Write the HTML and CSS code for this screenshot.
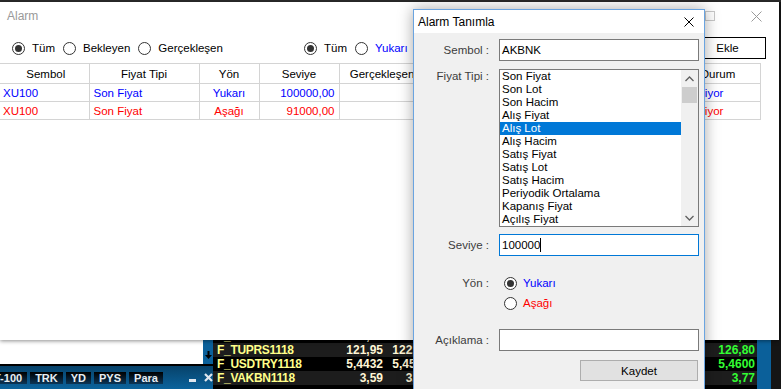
FILE: index.html
```html
<!DOCTYPE html>
<html lang="tr">
<head>
  <meta charset="UTF-8">
  <meta name="viewport" content="width=device-width, initial-scale=1.0">
  <title>Alarm</title>
  <link rel="stylesheet" href="styles.css">
</head>
<body>
  <!-- Trading app behind the windows -->
  <div class="app">
    <div class="app-top"></div>
    <div class="app-main">
      <div class="left-panel">
        <div class="panel-body">
          <div class="panel-white"></div>
          <div class="panel-strip">
            <svg width="7" height="8" viewBox="0 0 7 8"><path d="M2.5 0 H4.5 V4 H7 L3.5 8 L0 4 H2.5 Z" fill="#000"/></svg>
          </div>
        </div>
        <div class="tabbar">
          <span class="tab first">T-100</span>
          <span class="tab">TRK</span>
          <span class="tab">YD</span>
          <span class="tab">PYS</span>
          <span class="tab">Para</span>
          <span class="tab-tools">
            <svg width="7" height="9" viewBox="0 0 7 9"><rect x="0" y="6" width="7" height="3" fill="#dfe6ee"/></svg>
            <svg width="9" height="9" viewBox="0 0 9 9"><path d="M1 1 L8 8 M8 1 L1 8" stroke="#dfe6ee" stroke-width="2.2"/></svg>
          </span>
        </div>
      </div>
      <div class="quotes">
        <div class="qrow"><span class="q-name">F_TTKOM1118</span><span class="q-bid">3,72</span><span class="q-ask">3,73</span><span class="q-fill"></span><span class="q-last">3,85</span></div>
        <div class="qrow"><span class="q-name">F_TUPRS1118</span><span class="q-bid">121,95</span><span class="q-ask">122,00</span><span class="q-fill"></span><span class="q-last">126,80</span></div>
        <div class="qrow"><span class="q-name">F_USDTRY1118</span><span class="q-bid">5,4432</span><span class="q-ask">5,4500</span><span class="q-fill"></span><span class="q-last">5,4600</span></div>
        <div class="qrow"><span class="q-name">F_VAKBN1118</span><span class="q-bid">3,59</span><span class="q-ask">3,60</span><span class="q-fill"></span><span class="q-last">3,77</span></div>
        <div class="qrow"></div>
      </div>
      <div class="right-strip"></div>
      <div class="right-edge"></div>
    </div>
  </div>

  <!-- Alarm list window (inactive) -->
  <div class="alarm-window">
    <div class="titlebar">
      <span class="win-title">Alarm</span>
      <span class="win-btn"><span class="max-box"></span></span>
      <span class="win-btn">
        <svg width="11" height="11" viewBox="0 0 11 11"><path d="M0.5 0.5 L10.5 10.5 M10.5 0.5 L0.5 10.5" stroke="#9a9a9a" stroke-width="1"/></svg>
      </span>
    </div>
    <div class="toolbar">
      <div class="radio-group status">
        <span class="radio checked"><span class="circle"></span>Tüm</span>
        <span class="radio"><span class="circle"></span>Bekleyen</span>
        <span class="radio"><span class="circle"></span>Gerçekleşen</span>
      </div>
      <div class="radio-group">
        <span class="radio checked"><span class="circle"></span>Tüm</span>
        <span class="radio up"><span class="circle"></span>Yukarı</span>
      </div>
      <button class="btn-ekle">Ekle</button>
    </div>
    <table class="alarm-table">
      <colgroup>
        <col style="width: 89px">
        <col style="width: 110px">
        <col style="width: 60px">
        <col style="width: 80px">
        <col style="width: 86px">
        <col style="width: 120px">
        <col style="width: 131px">
        <col style="width: 84px">
      </colgroup>
      <thead>
        <tr>
          <th>Sembol</th>
          <th>Fiyat Tipi</th>
          <th>Yön</th>
          <th>Seviye</th>
          <th>Gerçekleşen</th>
          <th></th>
          <th></th>
          <th>Durum</th>
        </tr>
      </thead>
      <tbody>
        <tr class="up">
          <td>XU100</td>
          <td>Son Fiyat</td>
          <td class="center">Yukarı</td>
          <td class="right">100000,00</td>
          <td></td>
          <td></td>
          <td></td>
          <td class="state">Bekliyor</td>
        </tr>
        <tr class="down">
          <td>XU100</td>
          <td>Son Fiyat</td>
          <td class="center">Aşağı</td>
          <td class="right">91000,00</td>
          <td></td>
          <td></td>
          <td></td>
          <td class="state">Bekliyor</td>
        </tr>
      </tbody>
    </table>
  </div>

  <!-- Alarm definition dialog (active) -->
  <div class="dialog">
    <div class="dlg-titlebar">
      <span class="dlg-title">Alarm Tanımla</span>
      <span class="dlg-close">
        <svg width="10" height="10" viewBox="0 0 10 10"><path d="M0.5 0.5 L9.5 9.5 M9.5 0.5 L0.5 9.5" stroke="#000" stroke-width="1"/></svg>
      </span>
    </div>
    <div class="dlg-body">
      <div class="field f-symbol">
        <span class="field-label">Sembol :</span>
        <div class="input">AKBNK</div>
      </div>
      <div class="field f-list">
        <span class="field-label">Fiyat Tipi :</span>
        <div class="listbox">
          <div class="list-items">
            <div class="item">Son Fiyat</div>
            <div class="item">Son Lot</div>
            <div class="item">Son Hacim</div>
            <div class="item">Alış Fiyat</div>
            <div class="item selected">Alış Lot</div>
            <div class="item">Alış Hacim</div>
            <div class="item">Satış Fiyat</div>
            <div class="item">Satış Lot</div>
            <div class="item">Satış Hacim</div>
            <div class="item">Periyodik Ortalama</div>
            <div class="item">Kapanış Fiyat</div>
            <div class="item">Açılış Fiyat</div>
          </div>
          <div class="scrollbar">
            <div class="sb-btn">
              <svg width="9" height="6" viewBox="0 0 9 6"><polyline points="0.5,5 4.5,1 8.5,5" fill="none" stroke="#606060" stroke-width="1.3"/></svg>
            </div>
            <div class="sb-track"><div class="sb-thumb"></div></div>
            <div class="sb-btn">
              <svg width="9" height="6" viewBox="0 0 9 6"><polyline points="0.5,1 4.5,5 8.5,1" fill="none" stroke="#606060" stroke-width="1.3"/></svg>
            </div>
          </div>
        </div>
      </div>
      <div class="field f-level">
        <span class="field-label">Seviye :</span>
        <div class="input focused">100000<span class="caret"></span></div>
      </div>
      <div class="field f-dir">
        <span class="field-label">Yön :</span>
        <div class="dir-options">
          <span class="radio up checked"><span class="circle"></span>Yukarı</span>
          <span class="radio down"><span class="circle"></span>Aşağı</span>
        </div>
      </div>
      <div class="field f-note">
        <span class="field-label">Açıklama :</span>
        <div class="input"></div>
      </div>
      <div class="field f-save">
        <button class="btn-save">Kaydet</button>
      </div>
    </div>
  </div>
</body>
</html>
```

FILE: styles.css
```css
* {
  box-sizing: border-box;
}
body {
  margin: 0;
  width: 781px;
  height: 389px;
  overflow: hidden;
  position: relative;
  background-color: #000;
  font-family: "Liberation Sans", Arial, sans-serif;
  font-size: 11.5px;
  color: #000;
}

/* Background trading app */
.app {
  display: flex;
  flex-direction: column;
  height: 389px;
}
.app-top {
  height: 2px;
  background-color: #2b2b2b;
}
.app-main {
  flex: 1;
  display: flex;
  min-height: 0;
}
.left-panel {
  width: 213px;
  display: flex;
  flex-direction: column;
}
.panel-body {
  flex: 1;
  display: flex;
}
.panel-white {
  flex: 1;
  background-color: #fff;
}
.panel-strip {
  width: 10px;
  background-color: #0b609a;
  display: flex;
  align-items: flex-end;
  justify-content: center;
  padding-bottom: 5px;
}
.tabbar {
  height: 25px;
  border-top: 2px solid #000;
  background: linear-gradient(#07426a, #0b639c);
  display: flex;
  align-items: center;
  overflow: hidden;
}
.tab {
  height: 12px;
  line-height: 12px;
  padding: 0 5px;
  margin-right: 3px;
  font-weight: bold;
  font-size: 11px;
  color: #e6edf3;
  background: linear-gradient(#000, #0b3556);
  white-space: nowrap;
}
.tab.first {
  margin-left: -11px;
}
.tab-tools {
  margin-left: auto;
  display: flex;
  align-items: center;
  gap: 8px;
}
.quotes {
  flex: 1;
  background-color: #000;
  padding-top: 327px;
  overflow: hidden;
}
.qrow {
  display: flex;
  height: 14px;
  line-height: 14px;
  font-weight: bold;
  font-size: 12px;
  white-space: nowrap;
}
.qrow:nth-child(even) {
  background-color: #1d1d1d;
}
.q-name {
  width: 117px;
  padding-left: 4px;
  color: #ffff8a;
  letter-spacing: -0.3px;
}
.q-bid {
  width: 56px;
  text-align: right;
  padding-right: 3px;
  color: #fff6d6;
}
.q-ask {
  width: 46px;
  text-align: right;
  padding-right: 3px;
  color: #fff6d6;
}
.q-fill {
  flex: 1;
}
.q-last {
  width: 50px;
  text-align: right;
  padding-right: 2px;
  color: #33ff33;
}
.right-strip {
  width: 14px;
  background-color: #0b609a;
}
.right-edge {
  width: 10px;
  background-color: #151515;
}

/* Alarm list window */
.alarm-window {
  position: absolute;
  left: 0;
  top: 2px;
  width: 779px;
  height: 338px;
  background-color: #fff;
  box-shadow: 0 1px 4px rgba(0, 0, 0, 0.45);
}
.titlebar {
  height: 28px;
  display: flex;
  align-items: center;
}
.win-title {
  flex: 1;
  padding-left: 7px;
  font-size: 12px;
  color: #999;
}
.win-btn {
  width: 46px;
  height: 28px;
  display: flex;
  align-items: center;
  justify-content: center;
}
.max-box {
  width: 10px;
  height: 10px;
  border: 1px solid #c8c8c8;
}
.toolbar {
  height: 33px;
  padding: 3px 13px 0 12px;
  display: flex;
  align-items: center;
}
.radio-group {
  display: flex;
  align-items: center;
}
.radio-group.status {
  width: 292px;
}
.radio {
  display: inline-flex;
  align-items: center;
  gap: 7px;
  margin-right: 8px;
  white-space: nowrap;
}
.radio.up {
  color: #0000ff;
}
.radio.down {
  color: #ff0000;
}
.circle {
  width: 13px;
  height: 13px;
  border: 1px solid #333;
  border-radius: 50%;
  background-color: #fff;
  display: flex;
  align-items: center;
  justify-content: center;
}
.radio.checked .circle::after {
  content: "";
  width: 7px;
  height: 7px;
  border-radius: 50%;
  background-color: #333;
}
.btn-ekle {
  margin-left: auto;
  width: 77px;
  height: 22px;
  border: 1px solid #000;
  background-color: #fff;
  font: inherit;
  color: #000;
  padding: 0;
}
.alarm-table {
  border-collapse: collapse;
  table-layout: fixed;
  width: 760px;
}
.alarm-table th {
  height: 20px;
  padding: 0;
  font-weight: normal;
  text-align: center;
  background-color: #fff;
  border: 1px solid #d4d4d4;
}
.alarm-table td {
  height: 18px;
  padding: 0 4px;
  border: 1px solid #d4d4d4;
  white-space: nowrap;
  overflow: hidden;
}
.alarm-table th:first-child,
.alarm-table td:first-child {
  border-left: none;
  padding-left: 3px;
}
.alarm-table tr.up td {
  color: #0000ff;
}
.alarm-table tr.down td {
  color: #ff0000;
}
.alarm-table td.center {
  text-align: center;
}
.alarm-table td.right {
  text-align: right;
}
.alarm-table td.state {
  padding-left: 6px;
}

/* Alarm definition dialog */
.dialog {
  position: absolute;
  left: 413px;
  top: 9px;
  width: 292px;
  height: 384px;
  background-color: #f0f0f0;
  border: 1px solid #6aa4e0;
  box-shadow: 0 0 14px rgba(0, 0, 0, 0.35);
}
.dlg-titlebar {
  height: 23px;
  background-color: #fff;
  display: flex;
  align-items: center;
}
.dlg-title {
  flex: 1;
  padding-left: 4px;
  font-size: 12px;
}
.dlg-close {
  width: 30px;
  display: flex;
  justify-content: center;
}
.dlg-body {
  padding-right: 5px;
}
.field {
  display: flex;
  align-items: center;
}
.field-label {
  width: 75px;
  margin-right: 10px;
  text-align: right;
  color: #3c3c3c;
  white-space: nowrap;
}
.input {
  width: 200px;
  height: 22px;
  padding-left: 2px;
  border: 1px solid #7a7a7a;
  background-color: #fff;
  display: flex;
  align-items: center;
}
.input.focused {
  border-color: #0078d7;
}
.caret {
  width: 1px;
  height: 14px;
  background-color: #000;
}
.f-symbol {
  margin-top: 6px;
}
.f-list {
  margin-top: 8px;
  align-items: flex-start;
}
.f-list .field-label {
  line-height: 13px;
  padding-top: 1px;
}
.listbox {
  width: 200px;
  height: 158px;
  border: 1px solid #7a7a7a;
  background-color: #fff;
  display: flex;
}
.list-items {
  flex: 1;
  overflow: hidden;
}
.item {
  height: 13px;
  line-height: 13px;
  padding-left: 2px;
  white-space: nowrap;
}
.item.selected {
  background-color: #0078d7;
  color: #fff;
}
.scrollbar {
  width: 17px;
  background-color: #f0f0f0;
  display: flex;
  flex-direction: column;
}
.sb-btn {
  height: 17px;
  display: flex;
  align-items: center;
  justify-content: center;
}
.sb-track {
  flex: 1;
}
.sb-thumb {
  height: 16px;
  margin: 0 1px;
  background-color: #cdcdcd;
}
.f-level {
  margin-top: 7px;
}
.f-dir {
  margin-top: 17px;
  align-items: flex-start;
}
.f-dir .field-label {
  line-height: 20px;
}
.dir-options {
  display: flex;
  flex-direction: column;
  padding-left: 5px;
}
.dir-options .radio {
  height: 20px;
  gap: 6px;
}
.f-note {
  margin-top: 16px;
}
.f-save {
  margin-top: 9px;
  justify-content: flex-end;
}
.btn-save {
  width: 118px;
  height: 21px;
  margin-right: 1px;
  padding: 0;
  border: 1px solid #adadad;
  background-color: #e1e1e1;
  font: inherit;
  color: #000;
}
```
